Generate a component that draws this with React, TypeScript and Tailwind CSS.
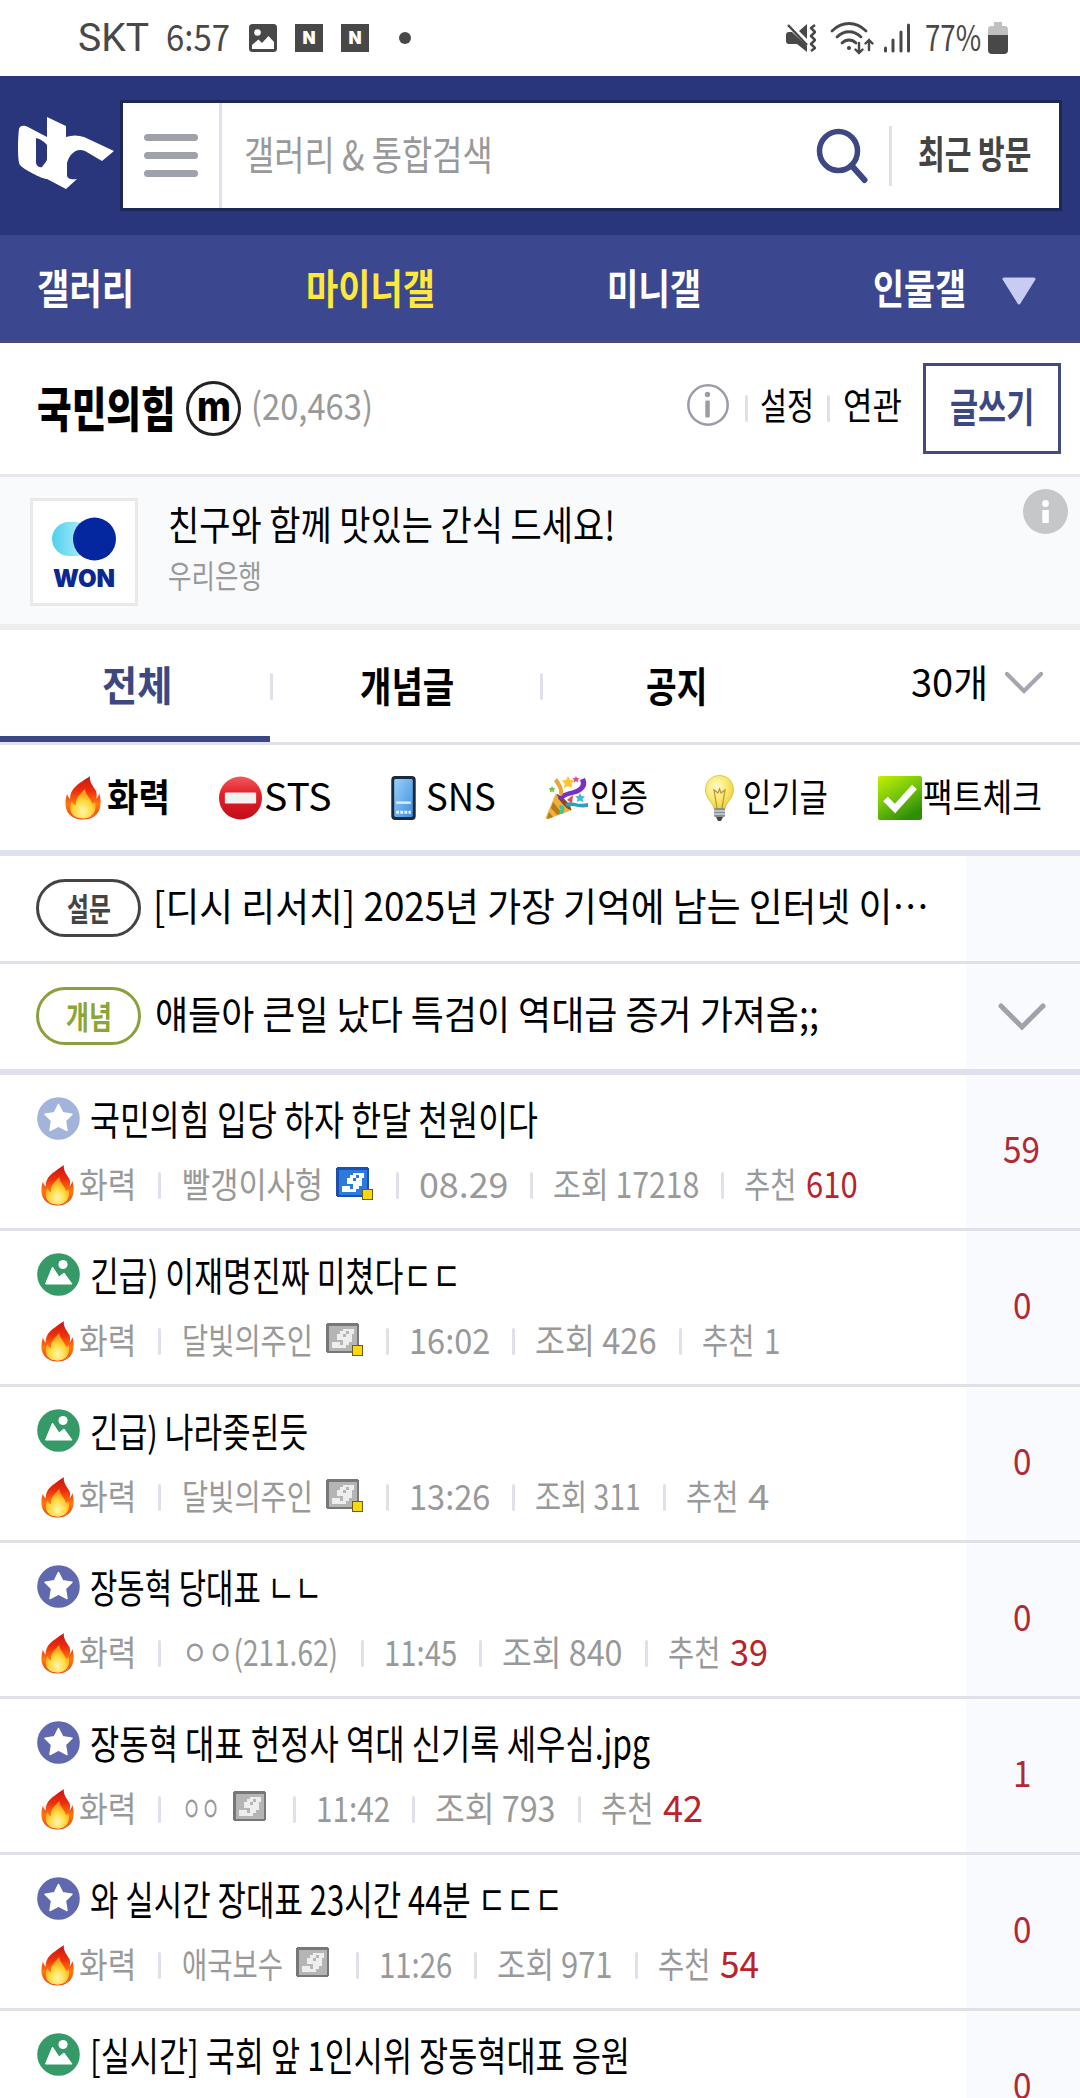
import { useLayoutEffect, useRef, useState, type ReactNode } from "react";

/* Single line of text, condensed or stretched to the width of its box. */
function Fit({ className = "", lift = 3, children }: { className?: string; lift?: number; children: ReactNode }) {
  const box = useRef<HTMLSpanElement>(null);
  const inner = useRef<HTMLSpanElement>(null);
  const [scale, setScale] = useState(1);
  useLayoutEffect(() => {
    if (box.current && inner.current && inner.current.offsetWidth > 0) {
      setScale(box.current.clientWidth / inner.current.offsetWidth);
    }
  }, []);
  return (
    <span ref={box} className={"block shrink-0 leading-none whitespace-nowrap " + className}>
      <span
        ref={inner}
        className="inline-block origin-left"
        style={{ transform: `translateY(${-lift}px) scaleX(${scale})` }}
      >
        {children}
      </span>
    </span>
  );
}

function Divider({ className = "" }: { className?: string }) {
  return <span className={"block h-[27px] w-[3px] shrink-0 rounded-full bg-[#e0e0ea] " + className} />;
}

function Fire({ className = "" }: { className?: string }) {
  return (
    <svg viewBox="0 0 36 44" preserveAspectRatio="none" className={"block shrink-0 " + className}>
      <defs>
        <linearGradient id="flame" x1="0" y1="0" x2="0" y2="1">
          <stop offset="0" stopColor="#c81414" />
          <stop offset="0.35" stopColor="#ee2f0c" />
          <stop offset="0.65" stopColor="#ff7a10" />
          <stop offset="1" stopColor="#e8401c" />
        </linearGradient>
        <radialGradient id="core" cx="0.5" cy="0.75" r="0.6">
          <stop offset="0" stopColor="#fff6b0" />
          <stop offset="0.6" stopColor="#ffd93a" />
          <stop offset="1" stopColor="#ff9a1c" />
        </radialGradient>
      </defs>
      <path
        d="M25 0C24 6 28 10 31 15C32 18 32 21 31 23C33 21 34 19 34 17C37 25 36 34 31 39C25 45 11 45 5 39C-1 33 0 25 2 18C3 21 4 22 5 23C5 12 14 8 19 4C22 2 24 1 25 0Z"
        fill="url(#flame)"
      />
      <path
        d="M20 13C20 18 24 20 27 27C28 28 29 27 30 26C32 33 29 38 26 40C21 44 12 43 8 39C4 35 5 29 7 25C8 28 10 29 11 29C10 22 15 18 20 13Z"
        fill="url(#core)"
      />
      <path d="M5 36C8 44 28 44 31 36C30 40 26 42 18 42C10 42 7 40 5 36Z" fill="#fff3c8" opacity="0.6" />
    </svg>
  );
}

function StopSign() {
  return (
    <svg viewBox="0 0 45 45" className="block h-[44px] w-[45px] shrink-0">
      <defs>
        <linearGradient id="stopRed" x1="0" y1="0" x2="0" y2="1">
          <stop offset="0" stopColor="#f25a5a" />
          <stop offset="0.4" stopColor="#e3202a" />
          <stop offset="1" stopColor="#c20d18" />
        </linearGradient>
      </defs>
      <circle cx="22.5" cy="22.5" r="22" fill="url(#stopRed)" />
      <rect x="6.5" y="17" width="32" height="11" rx="1" fill="#f2f0f0" />
    </svg>
  );
}

function Phone() {
  return (
    <svg viewBox="0 0 25 45" className="block h-[44px] w-[25px] shrink-0">
      <defs>
        <linearGradient id="screen" x1="0" y1="0" x2="1" y2="1">
          <stop offset="0" stopColor="#9ad0fb" />
          <stop offset="1" stopColor="#3b8fe0" />
        </linearGradient>
      </defs>
      <rect width="25" height="45" rx="4" fill="#1b2a3a" />
      <rect x="3" y="3" width="19" height="39" rx="1.5" fill="url(#screen)" />
      <rect x="5" y="26" width="15" height="2.5" fill="#d8ecff" />
      <path d="M5 37h15" stroke="#e6f3ff" strokeWidth="3" strokeDasharray="3 1.2" />
    </svg>
  );
}

function Popper() {
  return (
    <svg viewBox="0 0 44 44" className="block size-[44px] shrink-0">
      <path d="M11 17L27 34L3 43Q0 43 1 41Z" fill="#f0b13c" />
      <path d="M8 26L17 37L12 39L6 32Z M4 36L8 41L2 43Z" fill="#b97a1d" />
      <path d="M12 18C16 19 27 29 26 34C22 34 12 23 12 18Z" fill="#8a4a2a" />
      <path d="M17 25C20 18 32 20 37 15C42 11 42 7 40 2L35 4C37 9 35 11 31 13C25 16 17 15 13 23Z" fill="#7a2fc4" />
      <path d="M17 20C20 15 17 9 12 2L9 5C12 10 15 13 14 18Z" fill="#e9a63a" />
      <path d="M20 28C26 23 31 30 43 27V31C33 33 29 28 23 31Z" fill="#2a9fc0" />
      <path d="M15 29C20 29 20 33 18 38L14 37C16 34 16 33 14 31Z" fill="#36c6a8" />
      <path d="M22 24L28 19L27 27Z" fill="#e8474f" />
      <path d="M23 0l2.2 4 4.3.6-3 3 .8 4.3-4.3-2-4 2 .8-4.3-3-3 4.300-.6z" fill="#ffc62b" />
      <path d="M35 17l1.500 3 3.500.4-2.500 2.300.8 3.500-3.300-1.600-3 1.600.6-3.500-2.400-2.300 3.300-.4z" fill="#38bcd0" />
      <path d="M31 0l1 2 2.500.3-1.800 1.700.5 2.500-2.200-1.200-2.200 1.200.4-2.500L27.500 2.300 30 2z" fill="#e8488d" />
      <path d="M7 10l1 2 2.500.3-1.800 1.700.5 2.500L7 15.300l-2.200 1.200.4-2.500-1.800-1.700L6 12z" fill="#6cc644" />
    </svg>
  );
}

function Bulb() {
  return (
    <svg viewBox="0 0 29 46" className="block h-[46px] w-[29px] shrink-0">
      <defs>
        <radialGradient id="glass" cx="0.4" cy="0.35" r="0.7">
          <stop offset="0" stopColor="#fffbd0" />
          <stop offset="0.6" stopColor="#fbe566" />
          <stop offset="1" stopColor="#e9c93a" />
        </radialGradient>
      </defs>
      <path d="M14.500 .5C6 .5 .5 7 .5 14.500C.5 24 8 27 9 34H20C21 27 28.500 24 28.500 14.500C28.500 7 23 .5 14.500 .5Z" fill="url(#glass)" stroke="#d9bb3a" strokeWidth="0.8" />
      <path d="M12 33L9 15L13 18L14.500 14L16 18L20 15L17 33" fill="none" stroke="#b8962c" strokeWidth="1.200" />
      <rect x="9" y="33" width="11" height="9" rx="1.500" fill="#8c8f92" />
      <path d="M9 36h11M9 39h11" stroke="#d0d3d6" strokeWidth="1.300" />
      <path d="M11 42h7l-2 4h-3z" fill="#444" />
    </svg>
  );
}

function CheckBox() {
  return (
    <svg viewBox="0 0 44 44" className="block size-[44px] shrink-0">
      <defs>
        <linearGradient id="lime" x1="0" y1="0" x2="0.6" y2="1">
          <stop offset="0" stopColor="#c2f000" />
          <stop offset="0.5" stopColor="#79c80a" />
          <stop offset="1" stopColor="#2f8e08" />
        </linearGradient>
      </defs>
      <rect width="44" height="44" rx="2" fill="url(#lime)" />
      <path d="M7.500 23L17 32.500L36.500 11" fill="none" stroke="#fff" strokeWidth="6.500" />
    </svg>
  );
}

/* x, y and length of each horizontal run of light pixels on the badge */
const badgePixels = [
  [6, 2, 4], [5, 3, 2], [8, 3, 2], [4, 4, 2], [7, 4, 2], [4, 5, 5], [6, 6, 3], [6, 7, 2], [2, 7, 3], [2, 8, 5],
];

function GallogBadge({ blue, dot, className = "" }: { blue?: boolean; dot?: boolean; className?: string }) {
  const edge = blue ? "#1c4fae" : "#777";
  const face = blue ? "#2b7bdc" : "#b5b5b5";
  return (
    <svg viewBox="0 0 13 12" preserveAspectRatio="none" shapeRendering="crispEdges" className={"block h-[33px] w-[37px] shrink-0 " + className}>
      <rect x="0.400" y="0" width="11" height="11" fill={edge} />
      <rect x="0" y="0.400" width="11.700" height="10.200" fill={edge} />
      <rect x="1" y="1" width="9.800" height="9" fill={face} />
      <g fill={blue ? "#fff" : "#eee"}>
        {badgePixels.map(([x, y, w], i) => (
          <rect key={i} x={x} y={y} width={w} height="1" />
        ))}
      </g>
      {dot && (
        <>
          <rect x="9" y="8" width="4" height="4" fill="#6b5c17" />
          <rect x="9.500" y="8.500" width="3" height="3" fill="#fbd80c" />
        </>
      )}
    </svg>
  );
}

type Kind = "pale" | "star" | "image";

function PostIcon({ kind }: { kind: Kind }) {
  const fill = kind === "image" ? "#359a67" : kind === "star" ? "#6069ad" : "#a3b4da";
  return (
    <svg viewBox="0 0 43 43" className="ml-[37px] block size-[43px] shrink-0">
      <circle cx="21.500" cy="21.500" r="21.300" fill={fill} />
      {kind === "image" ? (
        <>
          <circle cx="26" cy="11.500" r="4.600" fill="#fff" />
          <path d="M8.500 31L15.500 14L22 24L27 20L35 31Z" fill="#fff" stroke="#fff" strokeLinejoin="round" />
        </>
      ) : (
        <path
          d="M21.500 7.500L25.700 15.800L35 17.200L28.400 23.700L30 33.500L21.500 29L13 33.500L14.600 23.700L8 17.200L17.300 15.800Z"
          fill="#fff"
          stroke="#fff"
          strokeWidth="1.500"
          strokeLinejoin="round"
        />
      )}
    </svg>
  );
}

type Meta = {
  author: string;
  authorW: string;
  badge?: "blue" | "dot" | "plain";
  date: string;
  dateW: string;
  views: string;
  viewsW: string;
  likes: string;
  likesW: string;
  hot?: boolean;
};

type Post = { kind: Kind; title: string; titleW: string; count: string; meta?: Meta };

const posts: Post[] = [
  { kind: "pale", title: "국민의힘 입당 하자 한달 천원이다", titleW: "w-[448px]", count: "59", meta: { author: "빨갱이사형", authorW: "w-[141px]", badge: "blue", date: "08.29", dateW: "w-[89px]", views: "조회 17218", viewsW: "w-[146px]", likes: "610", likesW: "w-[52px]", hot: true } },
  { kind: "image", title: "긴급) 이재명진짜 미쳤다ㄷㄷ", titleW: "w-[371px]", count: "0", meta: { author: "달빛의주인", authorW: "w-[131px]", badge: "dot", date: "16:02", dateW: "w-[81px]", views: "조회 426", viewsW: "w-[122px]", likes: "1", likesW: "w-[16px]" } },
  { kind: "image", title: "긴급) 나라좆된듯", titleW: "w-[218px]", count: "0", meta: { author: "달빛의주인", authorW: "w-[131px]", badge: "dot", date: "13:26", dateW: "w-[81px]", views: "조회 311", viewsW: "w-[106px]", likes: "4", likesW: "w-[21px]" } },
  { kind: "star", title: "장동혁 당대표 ㄴㄴ", titleW: "w-[232px]", count: "0", meta: { author: "ㅇㅇ(211.62)", authorW: "w-[156px]", date: "11:45", dateW: "w-[73px]", views: "조회 840", viewsW: "w-[121px]", likes: "39", likesW: "w-[38px]", hot: true } },
  { kind: "star", title: "장동혁 대표 헌정사 역대 신기록 세우심.jpg", titleW: "w-[560px]", count: "1", meta: { author: "ㅇㅇ", authorW: "w-[38px]", badge: "plain", date: "11:42", dateW: "w-[74px]", views: "조회 793", viewsW: "w-[121px]", likes: "42", likesW: "w-[40px]", hot: true } },
  { kind: "star", title: "와 실시간 장대표 23시간 44분 ㄷㄷㄷ", titleW: "w-[473px]", count: "0", meta: { author: "애국보수", authorW: "w-[101px]", badge: "plain", date: "11:26", dateW: "w-[73px]", views: "조회 971", viewsW: "w-[116px]", likes: "54", likesW: "w-[39px]", hot: true } },
  { kind: "image", title: "[실시간] 국회 앞 1인시위 장동혁대표 응원", titleW: "w-[540px]", count: "0" },
];

function MetaLine({ meta }: { meta: Meta }) {
  return (
    <div className="mt-[25px] flex h-[41px] items-center text-[35px] text-[#999]">
      <Fire className="ml-[41px] h-[41px] w-[33px]" />
      <Fit className="ml-[5px] w-[57px]">화력</Fit>
      <Divider className="ml-[22px]" />
      <Fit className={"ml-[21px] " + meta.authorW}>{meta.author}</Fit>
      {meta.badge && (
        <GallogBadge blue={meta.badge === "blue"} dot={meta.badge !== "plain"} className="mb-[5px] ml-[13px]" />
      )}
      <Divider className="ml-[23px]" />
      <Fit className={"ml-[20px] " + meta.dateW}>{meta.date}</Fit>
      <Divider className="ml-[22px]" />
      <Fit className={"ml-[20px] " + meta.viewsW}>{meta.views}</Fit>
      <Divider className="ml-[22px]" />
      <Fit className="ml-[20px] w-[52px]">추천</Fit>
      <Fit className={"ml-[10px] " + meta.likesW + (meta.hot ? " text-[37px] text-[#b9232c]" : "")}>{meta.likes}</Fit>
    </div>
  );
}

function PostRow({ post }: { post: Post }) {
  return (
    <div className="flex h-[156px] shrink-0 border-b-[3px] border-[#e0e0e9]">
      <div className="flex w-[966px] flex-col pt-[22px]">
        <div className="flex h-[43px] items-center">
          <PostIcon kind={post.kind} />
          <Fit className={"mt-[5px] ml-[10px] text-[40px] text-black " + post.titleW}>{post.title}</Fit>
        </div>
        {post.meta && <MetaLine meta={post.meta} />}
      </div>
      <div className="flex flex-1 items-center justify-center bg-[#f9fafd] text-[37px] leading-none text-[#b02a35]">
        <span className="mr-[2px] -mt-[9px] inline-block scale-x-90">{post.count}</span>
      </div>
    </div>
  );
}

function StatusBar() {
  return (
    <div className="flex h-[76px] shrink-0 items-center bg-white text-[36px] text-[#484848]">
      <Fit lift={0} className="ml-[78px] w-[71px] font-[Roboto] text-[38px]">SKT</Fit>
      <Fit className="ml-[17px] w-[64px]">6:57</Fit>
      <svg viewBox="0 0 28 28" className="ml-[19px] size-[28px]">
        <rect width="28" height="28" rx="3.500" fill="#484848" />
        <circle cx="8.500" cy="8.500" r="3.300" fill="#fff" />
        <path d="M3 25V21L9.500 15.500L13 19L19.500 12L25 18V25Z" fill="#fff" />
      </svg>
      <span className="ml-[18px] flex size-[28px] items-center justify-center bg-[#484848] font-[Inter] text-[17px] leading-none font-black text-white">N</span>
      <span className="ml-[18px] flex size-[28px] items-center justify-center bg-[#484848] font-[Inter] text-[17px] leading-none font-black text-white">N</span>
      <span className="ml-[30px] size-[12px] rounded-full bg-[#484848]" />
      <svg viewBox="0 0 30 28" className="ml-auto h-[28px] w-[30px]" fill="none" stroke="#484848">
        <path d="M1 8H6L21 22V28L11 20H3Q0 20 0 17V11Q0 8 3 8ZM13 7L21 0V15Z" fill="#484848" stroke="none" />
        <path d="M2 1L21 21" strokeWidth="2.500" />
        <path d="M29 1L25 4L29 8L25 12L29 16L25 20L29 24L25 27" strokeWidth="2.500" strokeLinejoin="round" />
      </svg>
      <svg viewBox="0 0 44 34" className="ml-[14px] h-[34px] w-[44px]" fill="none" stroke="#484848" strokeWidth="2.800" strokeLinecap="round">
        <path d="M2 10C12 0 26 0 36 10M7 16C14 9 24 9 31 16M12 22C16 18 22 18 26 22" />
        <circle cx="19" cy="27" r="1.300" fill="#484848" strokeWidth="1.500" />
        <path d="M29 22V32M25.500 28.500L29 32L32.500 28.500M39 29V19M35.500 22.500L39 19L42.500 22.500" strokeWidth="2.400" />
      </svg>
      <svg viewBox="0 0 28 30" className="ml-[9px] h-[30px] w-[28px]" fill="none" stroke="#484848" strokeWidth="3" strokeLinecap="round">
        <path d="M2.500 25V28M10 17V28M18 9V28M25.500 2V28" />
      </svg>
      <Fit className="ml-[14px] w-[56px]">77%</Fit>
      <svg viewBox="0 0 20 32" className="mr-[72px] ml-[7px] h-[32px] w-[20px]">
        <path d="M6 0H14V4H17Q20 4 20 8V14H0V8Q0 4 3 4H6Z" fill="#c0c0c0" />
        <path d="M0 13H20V28Q20 32 16 32H4Q0 32 0 28Z" fill="#484848" />
      </svg>
    </div>
  );
}

function Header() {
  return (
    <div className="flex h-[159px] shrink-0 bg-[#29367c] pt-[24px]">
      <svg viewBox="0 0 96 72" className="mt-[17px] ml-[18px] h-[72px] w-[96px] shrink-0" fill="#fff">
        <path
          fillRule="evenodd"
          d="M29 0L48 9V20C54 18 60 18 66 20L96 34L84 44L67 34C58 30 51 38 49 46V58C49 62 54 63 59 62L48 72L29 62C24 62 5 52 2 48C-1 44 0 18 1 12C2 8 6 8 10 10L29 20ZM18 21V46C19 50 22 51 24 50C27 46 29 44 29 42V28C27 25 22 22 18 21Z"
        />
      </svg>
      <div className="ml-[6px] flex h-[111px] w-[942px] items-center border-[3px] border-[#1d2758] bg-white">
        <div className="flex h-full w-[99px] flex-col justify-center gap-[11px] border-r-[3px] border-[#e0e1ea] pl-[21px]">
          <span className="h-[7px] w-[54px] rounded-full bg-[#9fa1ab]" />
          <span className="h-[7px] w-[54px] rounded-full bg-[#9fa1ab]" />
          <span className="h-[7px] w-[54px] rounded-full bg-[#9fa1ab]" />
        </div>
        <Fit className="ml-[22px] w-[249px] text-[40px] text-[#999]">갤러리 &amp; 통합검색</Fit>
        <svg viewBox="0 0 54 56" className="ml-[323px] h-[56px] w-[54px] shrink-0" fill="none" stroke="#3d4882">
          <ellipse cx="22.500" cy="23" rx="19" ry="19.500" strokeWidth="5.500" />
          <path d="M36 38L48.500 52" strokeWidth="6" strokeLinecap="round" />
        </svg>
        <span className="ml-[19px] h-[60px] w-[3px] bg-[#e0e1e6]" />
        <Fit lift={2} className="-mt-[4px] ml-[26px] w-[113px] text-[38px] font-bold text-[#444]">최근 방문</Fit>
      </div>
    </div>
  );
}

function Nav() {
  return (
    <div className="flex h-[108px] shrink-0 items-center border-b-[3px] border-[#454a80] bg-[#3b478e] text-[41px] font-bold text-white">
      <Fit lift={1} className="ml-[37px] w-[97px]">갤러리</Fit>
      <Fit lift={1} className="ml-[172px] w-[129px] text-[#ffe83c]">마이너갤</Fit>
      <Fit lift={1} className="ml-[172px] w-[94px]">미니갤</Fit>
      <Fit lift={1} className="ml-[172px] w-[93px]">인물갤</Fit>
      <svg viewBox="0 0 34 28" className="mt-[7px] ml-[36px] h-[28px] w-[34px]">
        <path d="M2 2H32L17 26Z" fill="#c8ccf3" stroke="#c8ccf3" strokeWidth="3" strokeLinejoin="round" />
      </svg>
    </div>
  );
}

function TitleBar() {
  return (
    <div className="flex h-[134px] shrink-0 items-center border-b-[3px] border-[#e6e6ee] bg-white text-[37px] text-black">
      <Fit className="ml-[37px] w-[139px] text-[48px] font-extrabold">국민의힘</Fit>
      <span className="ml-[10px] flex size-[55px] shrink-0 items-center justify-center rounded-full border-[3px] border-[#222]">
        <Fit lift={3} className="w-[34px] font-[Inter] text-[42px] font-extrabold">m</Fit>
      </span>
      <Fit lift={4} className="ml-[10px] w-[122px] text-[#999]">(20,463)</Fit>
      <svg viewBox="0 0 42 42" className="-mt-[7px] ml-[314px] size-[42px] shrink-0">
        <circle cx="21" cy="21" r="19.700" fill="none" stroke="#9c9ca8" strokeWidth="2.500" />
        <circle cx="20.500" cy="10.500" r="2.700" fill="#9c9ca8" />
        <rect x="18.300" y="16.500" width="4.500" height="17" rx="1" fill="#9c9ca8" />
      </svg>
      <Divider className="ml-[16px]" />
      <Fit lift={4} className="ml-[12px] w-[54px]">설정</Fit>
      <Divider className="ml-[13px]" />
      <Fit lift={4} className="ml-[13px] w-[59px]">연관</Fit>
      <div className="ml-[21px] flex h-[91px] w-[138px] items-center justify-center border-[3px] border-[#434a80]">
        <Fit lift={4} className="w-[84px] text-[40px] font-bold text-[#3d4882]">글쓰기</Fit>
      </div>
    </div>
  );
}

function AdBanner() {
  return (
    <div className="flex h-[153px] shrink-0 border-b-[6px] border-[#ededed] bg-[#f9fafc]">
      <div className="mt-[21px] ml-[30px] flex size-[108px] shrink-0 flex-col items-center border-[3px] border-[#e9e9e9] bg-white">
        <svg viewBox="0 0 64 44" className="mt-[16px] h-[44px] w-[64px] shrink-0">
          <defs>
            <linearGradient id="sky">
              <stop offset="0" stopColor="#4fd0ee" />
              <stop offset="1" stopColor="#c5f4fc" />
            </linearGradient>
          </defs>
          <rect x="0" y="5" width="40" height="34" rx="17" fill="url(#sky)" />
          <circle cx="42.500" cy="22" r="21.500" fill="#0427a0" />
        </svg>
        <Fit lift={0} className="mt-[6px] w-[62px] font-[Inter] text-[24px] font-black text-[#0b2790]">WON</Fit>
      </div>
      <div className="ml-[30px] flex flex-col pt-[29px]">
        <Fit className="w-[447px] text-[40px] text-black">친구와 함께 맛있는 간식 드세요!</Fit>
        <Fit className="mt-[15px] w-[94px] text-[32px] text-[#999]">우리은행</Fit>
      </div>
      <svg viewBox="0 0 45 45" className="mt-[12px] mr-[12px] ml-auto size-[45px] shrink-0">
        <circle cx="22.500" cy="22.500" r="22.500" fill="#c6c7c9" />
        <circle cx="22.500" cy="14.500" r="3.400" fill="#fff" />
        <rect x="19.300" y="21" width="6.500" height="13" fill="#fff" />
      </svg>
    </div>
  );
}

function Tabs() {
  return (
    <div className="flex h-[115px] shrink-0 items-stretch border-b-[3px] border-[#dfe1ec] bg-white text-[41px] font-bold text-black">
      <div className="flex w-[270px] items-center border-b-[6px] border-[#3b4684] pl-[102px] text-[#3d4882]">
        <Fit lift={0} className="w-[70px]">전체</Fit>
      </div>
      <div className="flex w-[270px] items-center">
        <Divider />
        <Fit lift={2} className="ml-[87px] w-[94px]">개념글</Fit>
      </div>
      <div className="flex w-[270px] items-center">
        <Divider />
        <Fit lift={2} className="ml-[103px] w-[61px]">공지</Fit>
      </div>
      <div className="flex items-center pb-[6px] pl-[101px]">
        <Fit lift={2} className="w-[77px] text-[38px] font-normal">30개</Fit>
        <svg viewBox="0 0 38 24" className="ml-[17px] h-[24px] w-[38px]">
          <path d="M2 3L19 20L36 3" fill="none" stroke="#a5a6b0" strokeWidth="4.200" strokeLinecap="round" />
        </svg>
      </div>
    </div>
  );
}

function Filters() {
  return (
    <div className="flex h-[111px] shrink-0 items-center border-b-[6px] border-[#dfe1ec] bg-white text-[38px] text-black">
      <Fire className="ml-[65px] h-[44px] w-[36px]" />
      <Fit className="ml-[6px] w-[63px] font-bold">화력</Fit>
      <span className="w-[48px] shrink-0" />
      <StopSign />
      <Fit className="ml-px w-[68px]">STS</Fit>
      <span className="w-[59px] shrink-0" />
      <Phone />
      <Fit className="ml-[10px] w-[70px]">SNS</Fit>
      <span className="w-[49px] shrink-0" />
      <Popper />
      <Fit className="ml-px w-[58px]">인증</Fit>
      <span className="w-[57px] shrink-0" />
      <Bulb />
      <Fit className="ml-[9px] w-[85px]">인기글</Fit>
      <span className="w-[50px] shrink-0" />
      <CheckBox />
      <Fit className="ml-px w-[119px]">팩트체크</Fit>
    </div>
  );
}

function Notices() {
  return (
    <>
      <div className="flex h-[108px] shrink-0 border-b-[3px] border-[#e0e0e9]">
        <div className="flex w-[966px] items-center pb-[2px]">
          <span className="ml-[36px] flex h-[58px] w-[105px] items-center justify-center rounded-full border-[3px] border-[#444] text-[32px] font-bold text-[#444]">
            <Fit lift={1} className="w-[44px]">설문</Fit>
          </span>
          <Fit className="ml-[12px] w-[776px] text-[39px] text-black">[디시 리서치] 2025년 가장 기억에 남는 인터넷 이⋯</Fit>
        </div>
        <div className="flex-1 bg-[#f9fafd]" />
      </div>
      <div className="flex h-[111px] shrink-0 border-b-[6px] border-[#e0e0ec]">
        <div className="flex w-[966px] items-center pb-[2px]">
          <span className="ml-[36px] flex h-[58px] w-[105px] items-center justify-center rounded-full border-[3px] border-[#8aa03c] text-[32px] font-bold text-[#8ba632]">
            <Fit lift={1} className="w-[46px]">개념</Fit>
          </span>
          <Fit className="ml-[14px] w-[664px] text-[39px] text-black">얘들아 큰일 났다 특검이 역대급 증거 가져옴;;</Fit>
        </div>
        <div className="flex flex-1 items-center justify-center bg-[#f9fafd]">
          <svg viewBox="0 0 48 30" className="mr-[2px] h-[30px] w-[48px]">
            <path d="M3 4L24 25L45 4" fill="none" stroke="#9fa1ab" strokeWidth="5" strokeLinecap="round" />
          </svg>
        </div>
      </div>
    </>
  );
}

export default function App() {
  return (
    <div className="flex h-[2098px] w-[1080px] flex-col overflow-hidden bg-white font-['Noto_Sans_CJK_KR',sans-serif]">
      <StatusBar />
      <Header />
      <Nav />
      <TitleBar />
      <AdBanner />
      <Tabs />
      <Filters />
      <Notices />
      {posts.map((post) => (
        <PostRow key={post.title} post={post} />
      ))}
    </div>
  );
}
